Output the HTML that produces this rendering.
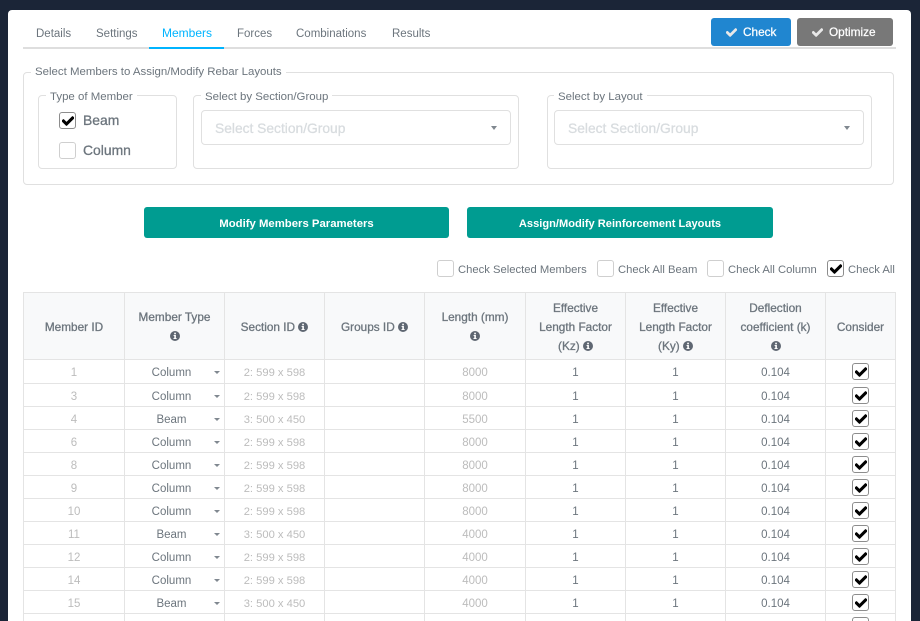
<!DOCTYPE html>
<html lang="en">
<head>
<meta charset="utf-8">
<title>Members</title>
<style>
html,body{margin:0;padding:0;width:920px;height:621px;overflow:hidden;background:#1b2537;}
*{box-sizing:border-box;}
body{font-family:"Liberation Sans",sans-serif;font-size:12px;color:#6c757d;position:relative;}
.card{position:absolute;left:8px;top:10px;width:903px;height:640px;background:#fff;border-radius:4px;}
.a{position:absolute;white-space:nowrap;}
.tabline{position:absolute;left:23px;top:47px;width:873px;height:2px;background:#dedede;}
.tabact{position:absolute;left:149px;top:47px;width:75px;height:2px;background:#00b4ff;}
.tab{position:absolute;top:27px;line-height:15px;font-size:11.5px;color:#6c757d;white-space:nowrap;}
.btn{position:absolute;top:18px;height:28px;border-radius:3px;color:#fff;font-size:11.8px;line-height:28px;-webkit-text-stroke:.25px #fff;}
.btn svg{position:absolute;top:9px;left:15px;width:11px;height:11px;fill:#e8e8e8;stroke:#e8e8e8;stroke-width:25;}
.btn span{position:absolute;left:32px;}
.fs{position:absolute;border:1px solid #e0e0e0;border-radius:4px;}
.lg{position:absolute;background:#fff;padding:0 4px;font-size:11.45px;line-height:15px;color:#6c757d;white-space:nowrap;}
.sel{position:absolute;top:110px;height:35px;border:1px solid #e0e0e0;border-radius:4px;background:#fff;}
.sel span{position:absolute;left:13px;top:10px;font-size:13.8px;line-height:16px;color:#d8dcdf;-webkit-text-stroke:.3px #d8dcdf;white-space:nowrap;}
.sel i{position:absolute;right:13px;top:15px;width:0;height:0;border-left:3.5px solid transparent;border-right:3.5px solid transparent;border-top:4px solid #808890;}
.cb{position:absolute;width:17px;height:17px;border:1px solid #cfcfcf;border-radius:3px;background:#fff;}
.cb.on{border-color:#8d8d8d;}
.cb svg{position:absolute;left:1.5px;top:1.5px;width:12px;height:12px;fill:#000;stroke:#000;stroke-width:30;}
.big{font-size:13.9px;line-height:16px;color:#6c757d;-webkit-text-stroke:.3px #6c757d;}
.teal{position:absolute;top:207px;height:31px;background:#009c91;border-radius:3px;color:#fff;text-align:center;font-weight:bold;line-height:34px;}
.lb{position:absolute;top:263px;font-size:11.25px;line-height:14px;color:#6c757d;white-space:nowrap;}
table{position:absolute;left:23px;top:292px;width:872px;border-collapse:collapse;table-layout:fixed;font-size:11.5px;}
th,td{border:1px solid #e4e4e4;text-align:center;padding:0;}
th{height:67px;padding-top:2px;background:#f8f9fa;font-weight:normal;line-height:19px;color:#6c757d;-webkit-text-stroke:.3px #6c757d;font-size:11.8px;}
td{height:23px;padding-top:4px;line-height:14px;color:#6c757d;position:relative;}
tr.f td{height:24px;padding-top:2px;}
td.g{color:#bcbcbc;}
td.s{font-size:11.2px;}
td.t{padding-right:6px;}
td.t i{position:absolute;right:4px;top:11px;width:0;height:0;border-left:3.5px solid transparent;border-right:3.5px solid transparent;border-top:3.5px solid #808890;}
td .cb{left:26px;top:3px;}
th svg.inf{width:10px;height:10px;vertical-align:-1px;margin-left:0;}
</style>
</head>
<body>
<svg width="0" height="0" style="position:absolute">
<symbol id="ck" viewBox="0 0 512 512"><path d="M173.898 439.404l-166.4-166.4c-9.997-9.997-9.997-26.206 0-36.204l36.203-36.204c9.997-9.998 26.207-9.998 36.204 0L192 312.69 432.095 72.596c9.997-9.997 26.207-9.997 36.204 0l36.203 36.204c9.997 9.997 9.997 26.206 0 36.204l-294.4 294.401c-9.998 9.997-26.207 9.997-36.204-.001z"/></symbol>
<symbol id="in" viewBox="0 0 10 10"><circle cx="5" cy="5" r="5" fill="#5f6772"/><rect x="4.2" y="1.7" width="1.7" height="1.6" fill="#fff"/><path d="M3.6 4h2.3v3h.7v1H3.5V7h.8V5h-.7z" fill="#fff"/></symbol>
</svg>
<div class="card"></div>

<div class="tabline"></div><div class="tabact"></div>
<div class="tab" style="left:36px">Details</div>
<div class="tab" style="left:96px">Settings</div>
<div class="tab" style="left:162px;top:26px;color:#00b4ff;font-size:12px">Members</div>
<div class="tab" style="left:237px">Forces</div>
<div class="tab" style="left:296px">Combinations</div>
<div class="tab" style="left:392px">Results</div>

<div class="btn" style="left:711px;width:80px;background:#2086d0"><svg><use href="#ck"/></svg><span>Check</span></div>
<div class="btn" style="left:797px;width:96px;background:#787878"><svg><use href="#ck"/></svg><span>Optimize</span></div>

<div class="fs" style="left:23px;top:72px;width:871px;height:113px"></div>
<div class="lg" style="left:31px;top:65px">Select Members to Assign/Modify Rebar Layouts</div>

<div class="fs" style="left:38px;top:95px;width:139px;height:74px"></div>
<div class="lg" style="left:46px;top:89px;line-height:16px">Type of Member</div>
<div class="cb on" style="left:59px;top:112px"><svg><use href="#ck"/></svg></div>
<div class="a big" style="left:83px;top:112px">Beam</div>
<div class="cb" style="left:59px;top:142px"></div>
<div class="a big" style="left:83px;top:142px">Column</div>

<div class="fs" style="left:193px;top:95px;width:326px;height:74px"></div>
<div class="lg" style="left:201px;top:89px;line-height:16px">Select by Section/Group</div>
<div class="sel" style="left:201px;width:310px"><span>Select Section/Group</span><i></i></div>

<div class="fs" style="left:547px;top:95px;width:325px;height:74px"></div>
<div class="lg" style="left:554px;top:89px;line-height:16px">Select by Layout</div>
<div class="sel" style="left:554px;width:310px"><span>Select Section/Group</span><i></i></div>

<div class="teal" style="left:144px;width:305px;font-size:11.35px">Modify Members Parameters</div>
<div class="teal" style="left:467px;width:306px;font-size:11.1px">Assign/Modify Reinforcement Layouts</div>

<div class="cb" style="left:437px;top:260px"></div><div class="lb" style="left:458px">Check Selected Members</div>
<div class="cb" style="left:597px;top:260px"></div><div class="lb" style="left:618px">Check All Beam</div>
<div class="cb" style="left:707px;top:260px"></div><div class="lb" style="left:728px">Check All Column</div>
<div class="cb on" style="left:827px;top:260px"><svg><use href="#ck"/></svg></div><div class="lb" style="left:848px">Check All</div>

<table>
<colgroup><col style="width:101px"><col style="width:100px"><col style="width:100px"><col style="width:100px"><col style="width:101px"><col style="width:100px"><col style="width:100px"><col style="width:100px"><col style="width:70px"></colgroup>
<tr>
<th>Member ID</th>
<th>Member Type<br><svg class="inf"><use href="#in"/></svg></th>
<th>Section ID <svg class="inf"><use href="#in"/></svg></th>
<th>Groups ID <svg class="inf"><use href="#in"/></svg></th>
<th>Length (mm)<br><svg class="inf"><use href="#in"/></svg></th>
<th>Effective<br>Length Factor<br>(Kz) <svg class="inf"><use href="#in"/></svg></th>
<th>Effective<br>Length Factor<br>(Ky) <svg class="inf"><use href="#in"/></svg></th>
<th>Deflection<br>coefficient (k)<br><svg class="inf"><use href="#in"/></svg></th>
<th>Consider</th>
</tr>
<tr class="f"><td class="g">1</td><td class="t">Column<i></i></td><td class="g s">2: 599 x 598</td><td></td><td class="g">8000</td><td>1</td><td>1</td><td>0.104</td><td><div class="cb on"><svg><use href="#ck"/></svg></div></td></tr>
<tr><td class="g">3</td><td class="t">Column<i></i></td><td class="g s">2: 599 x 598</td><td></td><td class="g">8000</td><td>1</td><td>1</td><td>0.104</td><td><div class="cb on"><svg><use href="#ck"/></svg></div></td></tr>
<tr><td class="g">4</td><td class="t">Beam<i></i></td><td class="g s">3: 500 x 450</td><td></td><td class="g">5500</td><td>1</td><td>1</td><td>0.104</td><td><div class="cb on"><svg><use href="#ck"/></svg></div></td></tr>
<tr><td class="g">6</td><td class="t">Column<i></i></td><td class="g s">2: 599 x 598</td><td></td><td class="g">8000</td><td>1</td><td>1</td><td>0.104</td><td><div class="cb on"><svg><use href="#ck"/></svg></div></td></tr>
<tr><td class="g">8</td><td class="t">Column<i></i></td><td class="g s">2: 599 x 598</td><td></td><td class="g">8000</td><td>1</td><td>1</td><td>0.104</td><td><div class="cb on"><svg><use href="#ck"/></svg></div></td></tr>
<tr><td class="g">9</td><td class="t">Column<i></i></td><td class="g s">2: 599 x 598</td><td></td><td class="g">8000</td><td>1</td><td>1</td><td>0.104</td><td><div class="cb on"><svg><use href="#ck"/></svg></div></td></tr>
<tr><td class="g">10</td><td class="t">Column<i></i></td><td class="g s">2: 599 x 598</td><td></td><td class="g">8000</td><td>1</td><td>1</td><td>0.104</td><td><div class="cb on"><svg><use href="#ck"/></svg></div></td></tr>
<tr><td class="g">11</td><td class="t">Beam<i></i></td><td class="g s">3: 500 x 450</td><td></td><td class="g">4000</td><td>1</td><td>1</td><td>0.104</td><td><div class="cb on"><svg><use href="#ck"/></svg></div></td></tr>
<tr><td class="g">12</td><td class="t">Column<i></i></td><td class="g s">2: 599 x 598</td><td></td><td class="g">4000</td><td>1</td><td>1</td><td>0.104</td><td><div class="cb on"><svg><use href="#ck"/></svg></div></td></tr>
<tr><td class="g">14</td><td class="t">Column<i></i></td><td class="g s">2: 599 x 598</td><td></td><td class="g">4000</td><td>1</td><td>1</td><td>0.104</td><td><div class="cb on"><svg><use href="#ck"/></svg></div></td></tr>
<tr><td class="g">15</td><td class="t">Beam<i></i></td><td class="g s">3: 500 x 450</td><td></td><td class="g">4000</td><td>1</td><td>1</td><td>0.104</td><td><div class="cb on"><svg><use href="#ck"/></svg></div></td></tr>
<tr><td class="g"></td><td></td><td></td><td></td><td></td><td></td><td></td><td></td><td><div class="cb on"><svg><use href="#ck"/></svg></div></td></tr>
</table>
</body>
</html>
